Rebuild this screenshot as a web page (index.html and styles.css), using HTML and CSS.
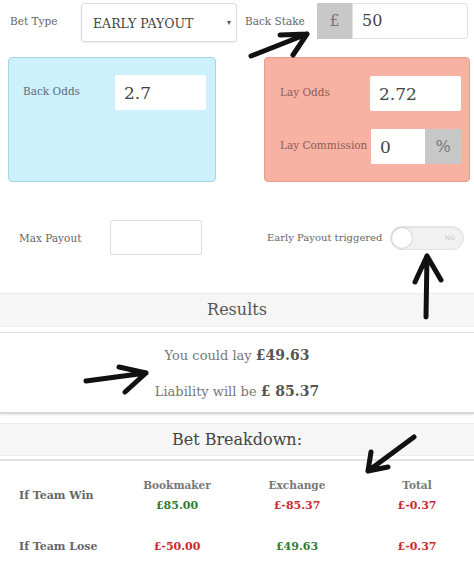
FILE: index.html
```html
<!DOCTYPE html>
<html>
<head>
<meta charset="utf-8">
<link rel="stylesheet" href="styles.css">
</head>
<body>
<div class="page">
  <div class="row-top">
    <div class="lbl lbl-bettype">Bet Type</div>
    <div class="select">EARLY PAYOUT<span class="caret">&#9662;</span></div>
    <div class="lbl lbl-stake">Back Stake</div>
    <div class="group">
      <div class="addon addon-pound">£</div>
      <div class="inp inp-stake">50</div>
    </div>
  </div>

  <div class="panels">
    <div class="panel panel-back">
      <div class="prow">
        <div class="plbl">Back Odds</div>
        <div class="inp pinp">2.7</div>
      </div>
    </div>
    <div class="panel panel-lay">
      <div class="prow">
        <div class="plbl">Lay Odds</div>
        <div class="inp pinp">2.72</div>
      </div>
      <div class="prow">
        <div class="plbl">Lay Commission</div>
        <div class="group">
          <div class="inp inp-comm">0</div>
          <div class="addon addon-pct">%</div>
        </div>
      </div>
    </div>
  </div>

  <div class="row-max">
    <div class="lbl lbl-max">Max Payout</div>
    <div class="inp inp-max"></div>
    <div class="lbl lbl-early">Early Payout triggered</div>
    <div class="toggle"><span class="knob"></span><span class="no">NO</span></div>
  </div>

  <div class="band band-results">Results</div>
  <div class="results">
    <p class="res-line">You could lay <b>£49.63</b></p>
    <p class="res-line">Liability will be <b>£ 85.37</b></p>
  </div>

  <div class="band band-break">Bet Breakdown:</div>

  <div class="table">
    <div class="trow trow-win">
      <div class="rlabel">If Team Win</div>
      <div class="cell"><div class="th">Bookmaker</div><div class="val green">£85.00</div></div>
      <div class="cell"><div class="th">Exchange</div><div class="val red">£-85.37</div></div>
      <div class="cell"><div class="th">Total</div><div class="val red">£-0.37</div></div>
    </div>
    <div class="trow trow-lose">
      <div class="rlabel">If Team Lose</div>
      <div class="cell"><div class="val red">£-50.00</div></div>
      <div class="cell"><div class="val green">£49.63</div></div>
      <div class="cell"><div class="val red">£-0.37</div></div>
    </div>
  </div>

  <svg class="arrows" width="474" height="568" viewBox="0 0 474 568">
    <g fill="none" stroke="#111" stroke-width="5" stroke-linecap="round" stroke-linejoin="round">
      <path d="M251 56 L307 34 M307 34 L280 35 M307 34 L293 55"/>
      <path d="M426 317 L427 256 M427 256 L415 282 M427 256 L441 280"/>
      <path d="M86 381 L146 373 M146 373 L119 367 M146 373 L125 392"/>
      <path d="M414 437 L368 471 M368 471 L371 452 M368 471 L388 467"/>
    </g>
  </svg>
</div>
</body>
</html>
```

FILE: styles.css
```css
html, body {
  margin: 0;
  padding: 0;
  background: #fff;
}
.page {
  position: relative;
  width: 474px;
  height: 568px;
  overflow: hidden;
  font-family: "DejaVu Serif", "Liberation Serif", serif;
  color: #666;
}
.lbl {
  font-size: 10.5px;
  color: #666;
}
.row-top {
  display: flex;
  align-items: center;
  height: 45px;
}
.lbl-bettype {
  width: 71px;
  padding-left: 10px;
  margin-top: -4px;
}
.select {
  box-sizing: border-box;
  width: 156px;
  height: 39px;
  margin-top: -1px;
  border: 1px solid #ddd;
  border-radius: 3px;
  box-shadow: 0 1px 2px rgba(0,0,0,0.08);
  display: flex;
  align-items: center;
  padding-left: 11px;
  padding-top: 3px;
  font-size: 12.5px;
  color: #444;
  position: relative;
}
.caret {
  position: absolute;
  right: 5px;
  top: 14px;
  font-size: 8px;
  color: #555;
}
.lbl-stake {
  width: 72px;
  padding-left: 8px;
  margin-top: -4px;
}
.group {
  display: flex;
}
.row-top .group {
  margin-top: -4px;
}
.addon {
  background: #c8c8c8;
  color: #777;
  display: flex;
  align-items: center;
  justify-content: center;
}
.addon-pound {
  width: 35px;
  height: 36px;
  font-size: 16px;
}
.inp {
  box-sizing: border-box;
  background: #fff;
  border: 1px solid #e2e2e2;
  display: flex;
  align-items: center;
  padding-left: 9px;
  color: #444;
  font-size: 16px;
}
.inp-stake {
  width: 116px;
  height: 36px;
  border-radius: 0 3px 3px 0;
}

.panels {
  display: flex;
  margin-top: 12px;
  height: 125px;
}
.panel {
  box-sizing: border-box;
  height: 125px;
  border-radius: 4px;
  border: 1px solid;
}
.panel-back {
  margin-left: 8px;
  width: 208px;
  background: #cdf0fd;
  border-color: #a5d6e8;
  padding: 17px 9px 0 14px;
}
.panel-lay {
  margin-left: 48px;
  width: 206px;
  background: #f8b2a3;
  border-color: #e99d8d;
  padding: 18px 8px 0 15px;
}
.prow {
  display: flex;
  align-items: center;
  justify-content: space-between;
  height: 35px;
}
.prow + .prow {
  margin-top: 18px;
}
.plbl {
  font-size: 10.5px;
}
.panel-back .plbl {
  color: #5d6d75;
  margin-top: -4px;
}
.panel-lay .plbl {
  color: #8c5c55;
  margin-top: -4px;
}
.pinp {
  width: 91px;
  height: 35px;
  border: none;
  border-radius: 2px;
  font-size: 17px;
}
.inp-comm {
  width: 54px;
  height: 35px;
  border: none;
  font-size: 17px;
}
.addon-pct {
  width: 36px;
  height: 35px;
  font-size: 16px;
}

.row-max {
  display: flex;
  align-items: center;
  margin-top: 38px;
  height: 35px;
}
.lbl-max {
  width: 91px;
  padding-left: 19px;
}
.inp-max {
  width: 92px;
  height: 35px;
  border-radius: 2px;
  border-color: #ddd;
}
.lbl-early {
  margin-left: 65px;
  width: 123px;
  font-size: 10px;
}
.toggle {
  box-sizing: border-box;
  position: relative;
  width: 74px;
  height: 24px;
  border-radius: 12px;
  background: #f1f1f1;
  border: 1px solid #e2e2e2;
  box-shadow: inset 0 1px 2px rgba(0,0,0,0.06);
}
.knob {
  position: absolute;
  left: 1px;
  top: 1px;
  width: 20px;
  height: 20px;
  border-radius: 50%;
  background: #fff;
  box-shadow: 0 0 2px rgba(0,0,0,0.3);
}
.no {
  position: absolute;
  right: 8px;
  top: 7px;
  font-size: 6px;
  color: #bbb;
}

.band {
  background: #f6f6f6;
  border-top: 1px solid #ececec;
  border-bottom: 1px solid #ececec;
  text-align: center;
  color: #555;
}
.band-results {
  margin-top: 38px;
  height: 32px;
  line-height: 32px;
  font-size: 16px;
}
.results {
  margin-top: 5px;
  border-top: 1px solid #e4e4e4;
  border-bottom: 2px solid #d8d8d8;
  box-shadow: 0 1px 2px rgba(0,0,0,0.1);
  height: 79px;
  text-align: center;
}
.res-line {
  margin: 0;
  font-size: 13px;
  color: #777;
}
.res-line:first-child {
  padding-top: 14px;
}
.res-line + .res-line {
  margin-top: 20px;
}
.res-line b {
  font-size: 14px;
  color: #555;
}
.band-break {
  margin-top: 9px;
  height: 31px;
  line-height: 31px;
  font-size: 16px;
  color: #444;
}

.table {
  border-top: 2px solid #e2e2e2;
  margin-top: 3px;
}
.trow {
  display: flex;
  align-items: center;
}
.trow-win {
  height: 44px;
  padding-top: 12px;
}
.trow-lose {
  height: 58px;
}
.rlabel {
  flex-shrink: 0;
  box-sizing: border-box;
  width: 117px;
  padding-left: 19px;
  font-size: 11px;
  font-weight: bold;
  color: #666;
}
.cell {
  flex-shrink: 0;
  width: 120px;
  text-align: center;
}
.th {
  font-size: 10.5px;
  font-weight: bold;
  color: #777;
  margin-bottom: 8px;
}
.val {
  font-size: 11px;
  font-weight: bold;
}
.green { color: #2f7d32; }
.red { color: #cc2a2f; }

.arrows {
  position: absolute;
  left: 0;
  top: 0;
  pointer-events: none;
}
```
